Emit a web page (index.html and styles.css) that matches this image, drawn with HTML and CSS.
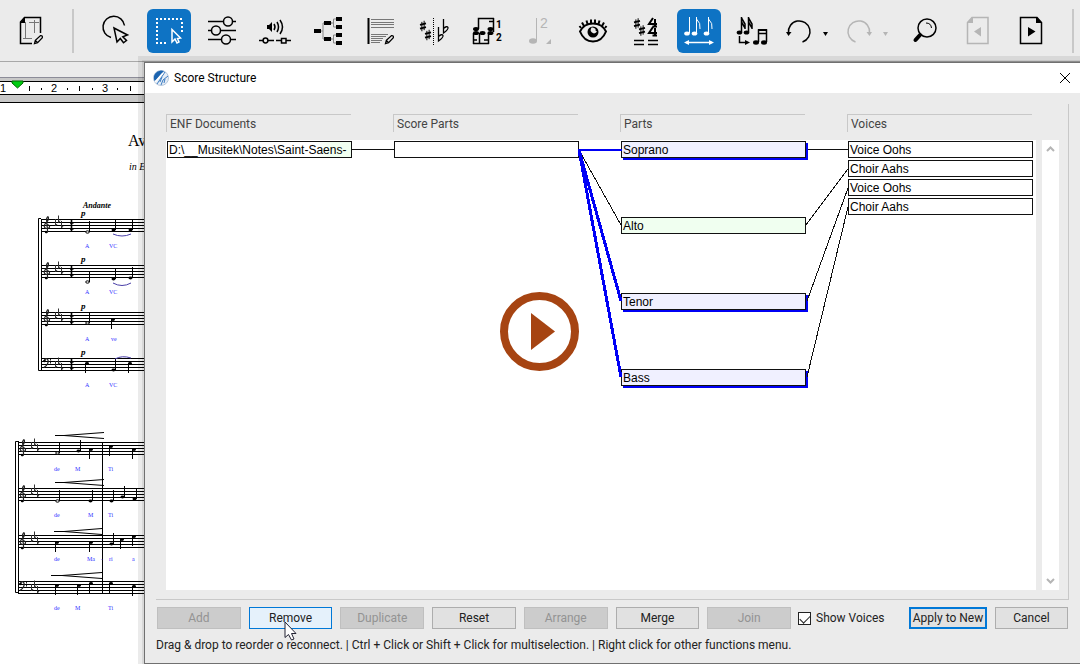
FILE: index.html
```html
<!DOCTYPE html>
<html lang="en">
<head>
  <meta charset="utf-8">
  <title>Score Structure</title>
  <link rel="stylesheet" href="styles.css">
</head>
<body>
  <!-- shared symbols -->
  <svg class="defs" aria-hidden="true">
    <symbol id="sharp" viewBox="0 0 8 14" overflow="visible">
      <path d="M2.5 1.5V14M5.5 0V12.5" stroke="currentColor" stroke-width="1.300" fill="none"/>
      <path d="M0 5.5L8 3.5M0 10.500L8 8.5" stroke="currentColor" stroke-width="2.400" fill="none"/>
    </symbol>
    <symbol id="flat" viewBox="0 0 6 15" overflow="visible">
      <path d="M.5 0V14Q5.500 10.500 5 8.500Q4 6.500 .5 9.500" stroke="currentColor" stroke-width="1.300" fill="none"/>
    </symbol>
    <symbol id="pencil" viewBox="0 0 10 10" overflow="visible">
      <path d="M.5 9.500L1.500 6L7 .8Q9.800 .2 9.300 3L4 8.500ZM1.500 6L4 8.500" stroke="currentColor" stroke-width="1.400" fill="none"/>
    </symbol>
    <symbol id="staff" viewBox="0 0 144 13" overflow="visible">
      <path d="M0 .5H144M0 3.500H144M0 6.500H144M0 9.500H144M0 12.500H144" stroke="#000" fill="none"/>
    </symbol>
    <symbol id="treble" viewBox="0 0 8 18" overflow="visible">
      <path d="M3 16.500Q5 17 4.500 14L3.500 3Q5-1 5.500 2Q5.500 5 2 8Q0 11 3 12.500Q7 12.500 6.500 10Q4.500 7.500 3 10" stroke="#222" stroke-width="1.200" fill="none"/>
      <circle cx="3" cy="16" r="1.200"/>
    </symbol>
    <symbol id="bass" viewBox="0 0 9 12" overflow="visible">
      <path d="M1 3Q3-1 5 2Q6 6 1 9.500" stroke="#222" stroke-width="1.300" fill="none"/>
      <circle cx="1.500" cy="3" r="1.300"/><path d="M7.500 1V2.500M7.500 4V5.500" stroke="#222"/>
    </symbol>
    <symbol id="keysig" viewBox="0 0 12 14" overflow="visible">
      <path d="M1.500 0V7L3 5M4.500-3.500V3.500L6 1.500M7.500 2V9L9 7" stroke="#333" fill="none"/>
    </symbol>
    <symbol id="time" viewBox="0 0 5 13" overflow="visible">
      <path d="M1 4H4.500M2.500 1V6M1 10H4.500M2.500 7V12.500" stroke="#000" stroke-width="1.600" fill="none"/>
    </symbol>
    <symbol id="up" viewBox="0 0 6 12" overflow="visible">
      <ellipse cx="1.500" cy="11" rx="2" ry="1.400"/><path d="M3.500 0V11" stroke="#000"/>
    </symbol>
    <symbol id="half" viewBox="0 0 6 12" overflow="visible">
      <ellipse cx="1.500" cy="11" rx="1.800" ry="1.200" fill="#fff" stroke="#000"/><path d="M3.500 0V11" stroke="#000"/>
    </symbol>
    <symbol id="down" viewBox="0 0 6 12" overflow="visible">
      <ellipse cx="2" cy="1.500" rx="2" ry="1.400"/><path d="M.5 1V11" stroke="#000"/>
    </symbol>
  </svg>

  <header class="toolbar">
    <button class="tool" aria-label="Edit page">
      <svg viewBox="0 0 44 44">
        <path d="M23 34.500H11.500V13L15.500 8.500H31.500V24" class="line bold"/>
        <path d="M11 14L16 8V14Z"/>
        <path d="M16.500 13V30M20 13.500H30M25.500 11V24M14 29.500H23" stroke="#777" fill="none"/>
        <use href="#pencil" x="25" y="26" width="9" height="9"/>
      </svg>
    </button>
    <span class="separator first"></span>
    <button class="tool" aria-label="Lasso select">
      <svg viewBox="0 0 44 44">
        <path d="M17 28.500A10.800 10.800 0 1 1 30.500 16.500" class="line bold"/>
        <path d="M20 19L33.500 26L28.800 27.800L32.500 31.500L29.500 33.800L26.300 29.500L23 33Z" class="line bold"/>
      </svg>
    </button>
    <button class="tool active" aria-label="Rectangle select">
      <svg viewBox="0 0 44 44">
        <path d="M9 10H36M10 13V35M35 13V23M13 34H20" stroke="currentColor" stroke-width="2" stroke-dasharray="2 2" fill="none"/>
        <path d="M25 20.500V33L28 30L30 34L32 33L30.500 29.500L33.500 29Z" class="line bold"/>
      </svg>
    </button>
    <button class="tool" aria-label="Settings">
      <svg viewBox="0 0 44 44">
        <path d="M8 12.500H23.500M32.500 12.500H36M8 21.500H11.500M20.500 21.500H36M8 30.500H21.500M30.500 30.500H36" class="line bold"/>
        <circle cx="28" cy="12.500" r="4.500" class="line bold"/><circle cx="16" cy="21.500" r="4.500" class="line bold"/><circle cx="26" cy="30.500" r="4.500" class="line bold"/>
      </svg>
    </button>
    <button class="tool" aria-label="Sound">
      <svg viewBox="0 0 44 44">
        <path d="M14 16H16L19 13V23L16 20H14Z"/>
        <path d="M21 15Q23 18 21 21M24 13Q27 18 24 23M27 11Q32 18 27 25" class="line bold"/>
        <path d="M6 31.500H10M15 31.500H21M23 31.500H28M33 31.500H38" class="line bold"/>
        <circle cx="12.500" cy="31.500" r="2.400" class="line bold"/><path d="M28.500 29.500H33V34H28.500Z" class="line bold"/>
      </svg>
    </button>
    <button class="tool" aria-label="Score structure">
      <svg viewBox="0 0 44 44">
        <path d="M14 22H17V14H26M17 22V30H26M24 14H27.500V10H31M27.500 14V18H31M24 30H27.500V26H31M27.500 30V34H31" stroke="#888" fill="none"/>
        <path d="M8 20H15V24H8ZM18 12H25V16H18ZM18 28H25V32H18ZM30 8H36V12H30ZM30 16H36V20H30ZM30 24H36V28H30ZM30 32H36V36H30Z"/>
      </svg>
    </button>
    <button class="tool" aria-label="Edit text">
      <svg viewBox="0 0 44 44">
        <path d="M9.500 9V35" class="line thick"/>
        <path d="M12 10.500H35M12 13.500H35M12 15.500H35M12 18.500H35M12 25.500H29M12 27.500H27M12 29.500H24M12 31.500H23M12 33.500H21" stroke="#777" fill="none"/>
        <use href="#pencil" x="26" y="26" width="9" height="9"/>
      </svg>
    </button>
    <button class="tool" aria-label="Accidentals">
      <svg viewBox="0 0 44 44">
        <use href="#sharp" x="8" y="10" width="6" height="14"/><use href="#sharp" x="13" y="19" width="6" height="14"/>
        <path d="M21.500 9V36" class="line" stroke-dasharray="1 1"/>
        <use href="#flat" x="26" y="18" width="6" height="15"/><use href="#flat" x="31" y="10" width="6" height="15"/>
      </svg>
    </button>
    <button class="tool" aria-label="Voices">
      <svg viewBox="0 0 44 44">
        <path d="M13.500 20V9.500H29M28.500 9V23M24 12.500H29M8.500 24V35M14.500 24V35M23.500 24V35M8 34.500H24M8 31H12M19 31H24" class="line bold"/>
        <g><ellipse cx="11" cy="20" rx="3" ry="2"/><ellipse cx="11" cy="24" rx="3" ry="2"/><ellipse cx="17.500" cy="24" rx="3" ry="2"/><ellipse cx="25.500" cy="20" rx="3" ry="2"/><ellipse cx="25.500" cy="24" rx="3" ry="2"/></g>
        <text x="31" y="19" class="digit">1</text><text x="31" y="32" class="digit">2</text>
      </svg>
    </button>
    <button class="tool" aria-label="Tuplet" disabled>
      <svg viewBox="0 0 44 44">
        <ellipse cx="15" cy="32" rx="4" ry="2.800"/><path d="M18.500 9V32" class="line"/>
        <text x="22" y="19" class="count">2</text><path d="M28 35L33 30V35Z"/>
      </svg>
    </button>
    <button class="tool" aria-label="Show or hide">
      <svg viewBox="0 0 44 44">
        <path d="M9 22.500Q13 14.500 22 14.500T35 22.500Q31 32.500 22 32.500T9 22.500Z" class="line thick"/>
        <path d="M10 19L8.500 17M13 17L11 13.500M16.500 15L15.500 11.500M20 14V10.500M24 14V10.500M27.500 15L28.500 11.500M31 17L33 13.500M34 19L35.500 17" class="line thick"/>
        <circle cx="22" cy="23" r="5.500"/><path d="M20.500 18.500Q18 23 23 24.500Q25 24 26 22.500Q24 22 24.500 20Q23 18 20.500 18.500Z" class="eye-light"/>
      </svg>
    </button>
    <button class="tool" aria-label="Key and time">
      <svg viewBox="0 0 44 44">
        <use href="#sharp" x="10" y="9" width="6" height="11"/><use href="#sharp" x="15" y="16" width="6" height="11"/>
        <path d="M29 9L25 15H33M31 10V18M28.500 17.500H33M29 18L25 24H33M31 19V27M28.500 26.500H33" class="line thick"/>
        <path d="M10 31.500H20M10 35.500H20M24 31.500H34M24 35.500H34" class="line bold"/>
      </svg>
    </button>
    <button class="tool active" aria-label="Spacing">
      <svg viewBox="0 0 44 44">
        <g><ellipse cx="10" cy="24.500" rx="2.800" ry="2"/><ellipse cx="17.500" cy="24.500" rx="2.800" ry="2"/><ellipse cx="29.500" cy="24.500" rx="2.800" ry="2"/></g>
        <path d="M12.500 8V24M19.500 8V24M19.500 10Q24 14 23 20M31.500 8V24M31.500 10Q36 14 35 20" class="line"/>
        <path d="M9 33.500H35" class="line bold"/><path d="M7 33.500L12 31V36ZM37 33.500L32 31V36Z"/>
      </svg>
    </button>
    <button class="tool" aria-label="Beam notes">
      <svg viewBox="0 0 44 44">
        <g><ellipse cx="9.500" cy="23.500" rx="2.800" ry="2"/><ellipse cx="16.500" cy="23.500" rx="2.800" ry="2"/><ellipse cx="26" cy="33.500" rx="3" ry="2.200"/><ellipse cx="34" cy="33.500" rx="3" ry="2.200"/></g>
        <path d="M11.500 8V23M11.500 9L15 15V20M11.500 13L15 19M18.500 8V23M18.500 9L22 15V20M18.500 13L22 19" class="line bold"/>
        <path d="M9.500 27V33.500H16M28.500 33V21H36.500V33M28.500 24.500H36.500" class="line bold"/>
        <path d="M28 20H37V22H28Z"/>
        <path d="M15 31L20 33.500L15 36Z"/>
      </svg>
    </button>
    <span class="history">
      <button class="tool narrow" aria-label="Undo">
        <svg viewBox="0 0 32 44"><path d="M5.500 24A10.800 10.800 0 1 1 19.500 33" class="line bold"/><path d="M3 23H8.500L5.500 27Z"/></svg>
      </button>
      <button class="caret" aria-label="Undo list"><svg viewBox="0 0 19 44"><path d="M8 23H13L10.500 27Z"/></svg></button>
    </span>
    <span class="history">
      <button class="tool narrow" aria-label="Redo" disabled>
        <svg viewBox="0 0 32 44"><path d="M26.500 24A10.800 10.800 0 1 0 12.500 33" class="line bold"/><path d="M23.500 23H29L26.500 27Z"/></svg>
      </button>
      <button class="caret" aria-label="Redo list" disabled><svg viewBox="0 0 19 44"><path d="M8 23H13L10.500 27Z"/></svg></button>
    </span>
    <button class="tool" aria-label="Zoom">
      <svg viewBox="0 0 44 44">
        <circle cx="24" cy="19" r="9" class="line bold"/><path d="M23 14Q28 14 28.500 19" class="line"/>
        <path d="M17 26L12.500 31" stroke="currentColor" stroke-width="4" stroke-linecap="round"/>
      </svg>
    </button>
    <button class="tool" aria-label="Previous page" disabled>
      <svg viewBox="0 0 44 44"><path d="M16 8.500H32V34.500H11.500V13.500Z" class="line bold"/><path d="M11 14L17 8V14ZM18 22.500L25 18V27.500Z"/></svg>
    </button>
    <button class="tool" aria-label="Next page">
      <svg viewBox="0 0 44 44"><path d="M11.500 8.500H28L32.500 13.500V34.500H11.500Z" class="line bold"/><path d="M27 8V14H33ZM19 18V27.500L26.500 22.500Z"/></svg>
    </button>
    <span class="separator"></span>
  </header>

  <main class="workspace">
    <section class="score">
      <div class="ruler">
        <svg width="144" height="12" viewBox="0 0 144 12">
          <path d="M29.500 4V9M41.500 6V8M67.500 6V8M79.500 4V9M92.500 6V8M117.500 6V8M130.500 4V9" stroke="#000"/>
          <text x="0" y="10">1</text><text x="51" y="10">2</text><text x="102" y="10">3</text>
          <path d="M12 -1H23V1L17.500 6L12 1Z" fill="#0c1" stroke="#060"/>
        </svg>
      </div>
      <div class="page">
        <svg class="sheet" width="144" height="561" viewBox="0 103 144 561">
          <text x="128" y="146" class="title">Av</text>
          <text x="129" y="170" class="subtitle">in E</text>
          <text x="83" y="208" class="tempo">Andante</text>

          <!-- first system -->
          <path d="M41.500 219V371" class="bar"/><path d="M41 218.500H38.500V370.500H42" class="bar"/>
          <g><use href="#staff" x="41" y="219" width="144" height="13"/><use href="#staff" x="41" y="265" width="144" height="13"/><use href="#staff" x="41" y="312" width="144" height="13"/><use href="#staff" x="41" y="358" width="144" height="13"/></g>
          <g><use href="#treble" x="43" y="216" width="8" height="18"/><use href="#treble" x="43" y="262" width="8" height="18"/><use href="#treble" x="43" y="309" width="8" height="18"/><use href="#bass" x="43" y="358" width="9" height="12"/></g>
          <g><use href="#keysig" x="54" y="219" width="12" height="14"/><use href="#keysig" x="54" y="265" width="12" height="14"/><use href="#keysig" x="54" y="312" width="12" height="14"/><use href="#keysig" x="54" y="361" width="12" height="14"/></g>
          <g><use href="#time" x="69" y="219" width="5" height="13"/><use href="#time" x="69" y="265" width="5" height="13"/><use href="#time" x="69" y="312" width="5" height="13"/><use href="#time" x="69" y="358" width="5" height="13"/></g>
          <g>
            <use href="#half" x="86" y="221" width="6" height="12"/><use href="#up" x="112" y="219" width="6" height="12"/><use href="#up" x="129" y="219" width="6" height="12"/>
            <use href="#half" x="86" y="271" width="6" height="12"/><use href="#up" x="112" y="268" width="6" height="12"/><use href="#up" x="129" y="267" width="6" height="12"/>
            <use href="#half" x="86" y="312" width="6" height="12"/><use href="#down" x="111" y="318" width="6" height="12"/>
            <use href="#down" x="85" y="362" width="6" height="12"/><use href="#up" x="112" y="359" width="6" height="12"/><use href="#down" x="128" y="362" width="6" height="12"/>
          </g>
          <path d="M113 234Q122 238 131 234M113 283Q122 288 131 283M115 359Q122 355 131 358" class="slur"/>
          <g class="dynamic"><text x="81" y="216">p</text><text x="81" y="262">p</text><text x="81" y="309">p</text><text x="81" y="355">p</text></g>
          <g class="lyric">
            <text x="85" y="248">A</text><text x="109" y="248">VC</text><text x="85" y="294">A</text><text x="109" y="294">VC</text>
            <text x="85" y="341">A</text><text x="111" y="341">ve</text><text x="85" y="387">A</text><text x="109" y="387">VC</text>
          </g>

          <!-- second system -->
          <path d="M18.500 442V594M102.500 442V594" class="bar"/><path d="M19 441.500H15.500V592.500H19" class="bar"/>
          <g><use href="#staff" x="18" y="442" width="144" height="13"/><use href="#staff" x="18" y="488" width="144" height="13"/><use href="#staff" x="18" y="535" width="144" height="13"/><use href="#staff" x="18" y="581" width="144" height="13"/></g>
          <g><use href="#treble" x="19" y="439" width="8" height="18"/><use href="#treble" x="19" y="485" width="8" height="18"/><use href="#treble" x="19" y="532" width="8" height="18"/><use href="#bass" x="19" y="581" width="9" height="12"/></g>
          <g><use href="#keysig" x="30" y="442" width="12" height="14"/><use href="#keysig" x="30" y="488" width="12" height="14"/><use href="#keysig" x="30" y="535" width="12" height="14"/><use href="#keysig" x="30" y="584" width="12" height="14"/></g>
          <path d="M55 435.500H64L104 432.500M64 435.500L104 438.500M55 482.500H64L104 479.500M64 482.500L104 485.500M54 531.500H64L102 528.500M64 531.500L102 534.500M51 575.500H62L102 572.500M62 575.500L102 578.500" class="hairpin"/>
          <g>
            <use href="#half" x="56" y="442" width="6" height="12"/><use href="#up" x="77" y="440" width="6" height="12"/><use href="#down" x="89" y="448" width="6" height="12"/><use href="#down" x="109" y="445" width="6" height="12"/><use href="#down" x="132" y="448" width="6" height="12"/>
            <use href="#half" x="56" y="490" width="6" height="12"/><use href="#up" x="89" y="490" width="6" height="12"/><use href="#up" x="110" y="490" width="6" height="12"/><use href="#up" x="121" y="486" width="6" height="12"/><use href="#up" x="133" y="488" width="6" height="12"/>
            <use href="#down" x="55" y="541" width="6" height="12"/><use href="#down" x="89" y="541" width="6" height="12"/><use href="#up" x="110" y="533" width="6" height="12"/><use href="#down" x="120" y="538" width="6" height="12"/><use href="#down" x="132" y="535" width="6" height="12"/>
            <use href="#down" x="55" y="584" width="6" height="12"/><use href="#down" x="77" y="584" width="6" height="12"/><use href="#down" x="89" y="582" width="6" height="12"/><use href="#down" x="109" y="582" width="6" height="12"/><use href="#down" x="132" y="585" width="6" height="12"/>
          </g>
          <g class="lyric">
            <text x="54" y="471">de</text><text x="75" y="471">M</text><text x="108" y="471">Ti</text>
            <text x="54" y="517">de</text><text x="88" y="517">M</text><text x="108" y="517">Ti</text>
            <text x="54" y="561">de</text><text x="87" y="561">Ma</text><text x="101" y="561">-</text><text x="109" y="561">ri</text><text x="132" y="561">a</text>
            <text x="54" y="610">de</text><text x="75" y="610">M</text><text x="108" y="610">Ti</text>
          </g>
        </svg>
      </div>
    </section>

    <section class="dialog" role="dialog" aria-labelledby="dialog-title">
      <div class="title-bar">
        <svg class="app-icon" width="16" height="16" viewBox="0 0 16 16">
          <circle cx="8" cy="8" r="7.500" fill="#e6edf6" stroke="#b4c6dc"/>
          <path d="M1 9Q0 2 8 .5L11 1L5 8L2 11Q1 11 1 9Z" fill="#1c64b0"/>
          <path d="M4 14L12 2M9 7L7 12M8 15L10 10L15 6M12 9L11 13" stroke="#3a7cc2" fill="none"/>
          <path d="M2 12L10 3" stroke="#fff" stroke-width="1.500" fill="none"/>
        </svg>
        <h1 id="dialog-title">Score Structure</h1>
        <button class="close" aria-label="Close"><svg width="12" height="12" viewBox="0 0 12 12"><path d="M1 1L11 11M11 1L1 11" stroke="#000" fill="none"/></svg></button>
      </div>

      <div class="structure">
        <div class="tree">
          <div class="columns headings">
            <span>ENF Documents</span>
            <span>Score Parts</span>
            <span>Parts</span>
            <span>Voices</span>
          </div>
          <div class="canvas">
            <svg class="links" width="870" height="450" viewBox="0 0 870 450">
              <path d="M186 9.500H228M642 9.500H682M413 10L455 85M640 85L682 29M641 161L682 48M641 237L682 67"/>
              <path d="M412 10H456" class="selected"/>
              <path d="M413 10L455 161M413 10L455 237" class="selected slanted"/>
            </svg>
            <div class="columns nodes">
              <div class="node document">D:\__Musitek\Notes\Saint-Saens-</div>
              <div class="node score-part"></div>
              <div class="node part soprano selected">Soprano</div>
              <div class="node part alto">Alto</div>
              <div class="node part tenor selected">Tenor</div>
              <div class="node part bass selected">Bass</div>
              <div class="node voice">Voice Oohs</div>
              <div class="node voice second">Choir Aahs</div>
              <div class="node voice third">Voice Oohs</div>
              <div class="node voice fourth">Choir Aahs</div>
            </div>
          </div>
        </div>
        <div class="scrollbar">
          <svg width="9" height="6" viewBox="0 0 9 6"><path d="M1 5L4.500 1.500L8 5"/></svg>
          <svg width="9" height="6" viewBox="0 0 9 6"><path d="M1 1L4.500 4.500L8 1"/></svg>
        </div>
      </div>

      <div class="footer">
        <div class="actions">
          <button disabled>Add</button>
          <button class="hover">Remove
            <svg class="pointer" width="13" height="20" viewBox="0 0 13 20"><path d="M1 1V16.500L4.500 13.500L7.500 19L10 18L7.500 12.500H12Z" fill="#fff" stroke="#223"/></svg>
          </button>
          <button disabled>Duplicate</button>
          <button>Reset</button>
          <button disabled>Arrange</button>
          <button>Merge</button>
          <button disabled>Join</button>
        </div>
        <label class="show-voices"><input type="checkbox" checked>Show Voices</label>
        <button class="apply">Apply to New</button>
        <button class="cancel">Cancel</button>
      </div>
      <p class="hint">Drag &amp; drop to reorder o reconnect. | Ctrl + Click or Shift + Click for multiselection. | Right click for other functions menu.</p>
    </section>
  </main>

  <button class="play" aria-label="Play video">
    <svg width="80" height="80" viewBox="0 0 80 80">
      <circle cx="39.500" cy="39.500" r="35.500" fill="#fff" stroke="#a64412" stroke-width="8"/>
      <path d="M31 21V58L55 39.500Z" fill="#a64412"/>
    </svg>
  </button>
</body>
</html>
```
FILE: styles.css
```css
* {
  box-sizing: border-box;
}

body {
  display: flex;
  flex-direction: column;
  height: 100vh;
  margin: 0;
  overflow: hidden;
  background: #ebebeb;
  color: #222;
  font-family: Roboto, "Open Sans", sans-serif;
  font-size: 12px;
}

button {
  padding: 0;
  font: inherit;
  color: inherit;
}

.defs {
  display: none;
}

/* toolbar */
.toolbar {
  display: flex;
  align-items: center;
  gap: 9px;
  height: 62px;
  padding: 0 9px;
  border-bottom: 1px solid #a8a8a8;
}

.tool,
.caret {
  flex: none;
  width: 44px;
  height: 44px;
  border: 0;
  border-radius: 6px;
  background: none;
  color: #000;
}

.tool svg,
.caret svg {
  display: block;
  width: 100%;
  height: 100%;
  fill: currentColor;
}

.tool.narrow {
  width: 32px;
}

.caret {
  width: 19px;
}

.tool.active {
  background: #0e73c4;
  color: #fff;
}

.tool:disabled,
.caret:disabled {
  color: #b5b5b5;
}

.history {
  display: flex;
}

.toolbar .line {
  fill: none;
  stroke: currentColor;
}

.toolbar .bold {
  stroke-width: 1.5;
}

.toolbar .thick {
  stroke-width: 2;
}

.eye-light {
  fill: #ebebeb;
}

.digit {
  font-size: 10px;
  font-weight: bold;
}

.count {
  font-family: "Liberation Sans", sans-serif;
  font-size: 14px;
}

.separator {
  flex: none;
  width: 2px;
  height: 44px;
  margin-left: 10px;
  background: #c8c8c8;
}

.separator.first {
  margin-right: 11px;
}

/* score behind the dialog */
.workspace {
  flex: 1;
  display: grid;
  grid-template-columns: 144px 1fr;
  min-height: 0;
}

.score {
  display: flex;
  flex-direction: column;
  min-height: 0;
  padding-top: 15px;
  overflow: hidden;
}

.ruler {
  height: 26px;
  padding-top: 3px;
  border-top: 1px solid #8c8c98;
  border-bottom: 1px solid #000;
  background: #c8c8c8;
}

.ruler svg {
  display: block;
  border-top: 1px solid #000;
  border-bottom: 1px solid #000;
  box-sizing: content-box;
  background: #fff;
  font-family: "Liberation Sans", sans-serif;
  font-size: 11px;
  overflow: visible;
}

.page {
  flex: 1;
  background: #fff;
}

.sheet {
  display: block;
  font-family: "Liberation Serif", serif;
}

.title {
  font-size: 16px;
}

.subtitle {
  font-size: 10px;
  font-style: italic;
}

.tempo {
  font-size: 8px;
  font-style: italic;
  font-weight: bold;
}

.dynamic {
  font-size: 9px;
  font-style: italic;
  font-weight: bold;
}

.lyric {
  font-size: 6px;
  fill: #3333ff;
}

.bar,
.hairpin {
  fill: none;
  stroke: #000;
}

.slur {
  fill: none;
  stroke: #4a3fa8;
}

/* dialog */
.dialog {
  position: relative;
  display: flex;
  flex-direction: column;
  min-width: 0;
  border: 1px solid #707070;
  border-right: 0;
  background: #ebebeb;
  box-shadow: 0 0 0 2px rgba(0, 0, 0, 0.08), 0 0 0 6px rgba(0, 0, 0, 0.08);
}

.title-bar {
  display: flex;
  align-items: center;
  gap: 5px;
  height: 30px;
  padding: 0 9px 0 8px;
  background: #fff;
}

.title-bar h1 {
  flex: 1;
  margin: 0;
  color: #000;
  font-size: 12px;
  font-weight: normal;
}

.close {
  display: flex;
  border: 0;
  background: none;
}

.structure {
  flex: 1;
  display: flex;
  gap: 6px;
  min-height: 0;
  margin: 11px 11px 0;
  padding: 10px 9px 9px 10px;
  border-right: 1px solid #c8c8c8;
  border-bottom: 1px solid #c8c8c8;
}

.tree {
  flex: 1;
  display: flex;
  flex-direction: column;
  min-width: 0;
}

.columns {
  display: grid;
  grid-template-columns: repeat(4, 185px);
  column-gap: 42px;
}

.headings {
  height: 26px;
}

.headings span {
  height: 18px;
  padding-left: 3px;
  border-top: 1px solid #c8c8c8;
  border-left: 1px solid #c8c8c8;
  color: #444;
  line-height: 18px;
}

.canvas {
  position: relative;
  flex: 1;
  background: #fff;
  overflow: hidden;
}

.links {
  position: absolute;
  top: 0;
  left: 0;
  fill: none;
  stroke: #111;
  shape-rendering: crispEdges;
}

.links .selected {
  stroke: #0000f5;
  stroke-width: 2;
}

.links .slanted {
  stroke-width: 3;
}

.nodes {
  grid-auto-rows: 17px;
  row-gap: 2px;
  padding: 1px;
}

.node {
  grid-row: 1;
  padding-left: 1px;
  border: 1px solid #111;
  background: #fff;
  color: #000;
  font-family: "Liberation Sans", sans-serif;
  line-height: 17px;
  white-space: nowrap;
}

.node.document {
  grid-column: 1;
  background: linear-gradient(to right, #fff 80%, #f0fff0 90%);
}

.node.score-part {
  grid-column: 2;
}

.node.part {
  grid-column: 3;
  background: #f0fff0;
}

.node.voice {
  grid-column: 4;
}

.node.selected {
  background: #f0f0ff;
  box-shadow: 2px 2px 0 #0000f5;
}

.alto { grid-row: 5; }
.tenor { grid-row: 9; }
.bass { grid-row: 13; }
.second { grid-row: 2; }
.third { grid-row: 3; }
.fourth { grid-row: 4; }

.scrollbar {
  display: flex;
  flex-direction: column;
  align-items: center;
  justify-content: space-between;
  width: 17px;
  margin-top: 26px;
  padding: 6px 0;
  background: #fff;
}

.scrollbar path {
  fill: none;
  stroke: #b5b5b5;
  stroke-width: 2;
}

/* footer */
.footer {
  display: flex;
  height: 22px;
  margin: 7px 12px 0;
}

.actions {
  flex: 1;
  display: flex;
  gap: 8px;
}

.footer button {
  border: 1px solid #adadad;
  background: #e1e1e1;
}

.actions button {
  flex: 1;
}

.footer button:disabled {
  border-color: #bfbfbf;
  background: #cccccc;
  color: #939393;
}

.footer .hover {
  position: relative;
  border-color: #0078d7;
  background: #e5f1fb;
}

.pointer {
  position: absolute;
  top: 13px;
  left: 34px;
  z-index: 1;
}

.show-voices {
  display: flex;
  align-items: center;
  gap: 5px;
  width: 118px;
  padding-left: 7px;
}

.show-voices input {
  appearance: none;
  width: 13px;
  height: 13px;
  margin: 0;
  border: 1px solid #222;
  background: #fff;
}

.show-voices input:checked::before {
  content: "";
  display: block;
  width: 9px;
  height: 5px;
  margin: 2px 1px;
  border-left: 1px solid #222;
  border-bottom: 1px solid #222;
  transform: rotate(-45deg);
}

.footer .apply {
  width: 78px;
  margin-right: 8px;
  border: 2px solid #0078d7;
  white-space: nowrap;
}

.footer .cancel {
  width: 73px;
}

.hint {
  margin: 7px 11px 9px;
  line-height: 18px;
  white-space: nowrap;
}

/* video overlay */
.play {
  position: fixed;
  inset: 0;
  width: 80px;
  height: 80px;
  margin: auto;
  border: 0;
  border-radius: 50%;
  background: none;
}
```
